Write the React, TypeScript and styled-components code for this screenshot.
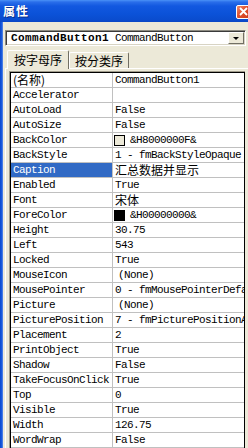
import React from "react";
import styled, { createGlobalStyle } from "styled-components";

const Global = createGlobalStyle`
  html, body { margin: 0; padding: 0; background: #ece9d8; }
  body { width: 248px; height: 448px; overflow: hidden; }
`;

const MONO = `"Liberation Mono", "Noto Sans CJK SC", monospace`;
const CJK = `"Noto Sans CJK SC", "Liberation Sans", sans-serif`;

const Window = styled.div`
  width: 248px;
  height: 448px;
  overflow: hidden;
  display: flex;
  flex-direction: column;
  background: #ece9d8;
`;

const TitleBar = styled.div`
  height: 22px;
  flex: none;
  display: flex;
  align-items: center;
  justify-content: space-between;
  background: linear-gradient(
    to bottom,
    #4a92f7 0px,
    #2a6eea 2px,
    #1258e0 6px,
    #0b52d8 14px,
    #0a4cce 20px,
    #0a47c4 22px
  );
  overflow: hidden;
`;

const Title = styled.span`
  font-family: ${CJK};
  font-weight: 700;
  font-size: 12px;
  letter-spacing: 1px;
  color: #fff;
  padding-left: 3px;
  line-height: 22px;
  text-shadow: 1px 1px 0 #0a2f8a;
`;

const CloseButton = styled.div`
  width: 15px;
  height: 14px;
  margin-right: -3px;
  margin-top: 1px;
  box-sizing: border-box;
  border: 1px solid #fff;
  border-radius: 2px;
  background: linear-gradient(135deg, #f08a6a 0%, #e0502e 45%, #c8381a 100%);
  display: flex;
  align-items: center;
  justify-content: flex-start;
  padding-left: 2px;
`;

const Body = styled.div`
  flex: 1;
  display: flex;
  min-height: 0;
`;

const LeftFrame = styled.div`
  width: 3px;
  flex: none;
  background: linear-gradient(to right, #0a48cc 0px, #1d5fe0 2px, #6f98e8 3px);
`;

const Main = styled.div`
  flex: 1;
  display: flex;
  flex-direction: column;
  padding-left: 2px;
  min-width: 0;
`;

const Combo = styled.div`
  margin-top: 8px;
  width: 241px;
  height: 16px;
  box-sizing: border-box;
  border: 1px solid;
  border-color: #8c8a80 #ffffff #ffffff #8c8a80;
  box-shadow: inset 1px 1px 0 #3a3a3a, inset -1px -1px 0 #d8d4c4;
  background: #fff;
  display: flex;
  align-items: stretch;
  padding: 1px;
  flex: none;
`;

const ComboText = styled.div`
  flex: 1;
  padding-left: 4px;
  font-family: ${MONO};
  font-size: 11px;
  line-height: 12px;
  color: #000;
  white-space: nowrap;
  overflow-x: clip;
`;

const BoldName = styled.span`
  font-weight: 700;
  letter-spacing: 0.4px;
`;

const TypeName = styled.span`
  letter-spacing: -0.6px;
`;

const DropButton = styled.div`
  width: 16px;
  box-sizing: border-box;
  background: #ece9d8;
  border: 1px solid;
  border-color: #ffffff #716f64 #716f64 #ffffff;
  display: flex;
  align-items: center;
  justify-content: center;
`;

const Arrow = styled.div`
  width: 0;
  height: 0;
  border-left: 3px solid transparent;
  border-right: 3px solid transparent;
  border-top: 3px solid #000;
  margin-top: 1px;
`;

const TabRow = styled.div`
  margin-top: 3px;
  margin-left: 2px;
  height: 19px;
  display: flex;
  align-items: flex-end;
  flex: none;
`;

const Tab = styled.div<{ $active?: boolean; $w: number }>`
  width: ${(p) => p.$w}px;
  height: ${(p) => (p.$active ? 19 : 16)}px;
  box-sizing: border-box;
  border-top: 1px solid #fff;
  border-left: 1px solid #fff;
  border-right: 1px solid #716f64;
  border-radius: 2px 2px 0 0;
  background: #ece9d8;
  font-family: ${CJK};
  font-size: 12px;
  line-height: ${(p) => (p.$active ? 17 : 15)}px;
  text-align: center;
  color: #000;
  position: relative;
  z-index: ${(p) => (p.$active ? 1 : 0)};
  margin-bottom: ${(p) => (p.$active ? -1 : 0)}px;
`;

const Panel = styled.div`
  flex: 1;
  min-height: 0;
  border-top: 1px solid #fff;
  border-left: 1px solid #fff;
  padding: 2px 0 0 3px;
`;

const GridOuter = styled.div`
  width: 236px;
  height: 100%;
  box-sizing: border-box;
  border-left: 1px solid #a09c8c;
  border-top: 1px solid #a09c8c;
`;

const Grid = styled.div`
  height: 100%;
  box-sizing: border-box;
  border-left: 1px solid #000;
  border-top: 1px solid #000;
  border-right: 1px solid #000;
  background: #fff;
`;

const Row = styled.div`
  display: flex;
  height: 15px;
  box-sizing: border-box;
  border-bottom: 1px solid #c0c0c0;
`;

const NameCell = styled.div<{ $selected?: boolean }>`
  width: 102px;
  flex: none;
  box-sizing: border-box;
  border-right: 1px solid #c0c0c0;
  padding-left: 2px;
  background: ${(p) => (p.$selected ? "#316ac5" : "#fff")};
  color: ${(p) => (p.$selected ? "#fff" : "#000")};
  font-family: ${MONO};
  font-size: 11px;
  letter-spacing: -0.6px;
  line-height: 14px;
  white-space: nowrap;
  overflow-x: clip;
`;

const ValueCell = styled.div<{ $indent?: number }>`
  flex: 1;
  min-width: 0;
  padding-left: ${(p) => 2 + (p.$indent ?? 0)}px;
  display: flex;
  align-items: center;
  font-family: ${MONO};
  font-size: 11px;
  letter-spacing: -0.6px;
  line-height: 14px;
  white-space: nowrap;
  overflow-x: clip;
  color: #000;
`;

const Cjk = styled.span`
  font-family: ${CJK};
  font-size: 12px;
  letter-spacing: 0;
  line-height: 14px;
`;

const Swatch = styled.span<{ $color: string }>`
  display: inline-block;
  width: 11px;
  height: 11px;
  box-sizing: border-box;
  border: 1px solid #000;
  background: ${(p) => p.$color};
  margin-left: -1px;
  margin-right: 5px;
  flex: none;
`;

type Prop = {
  name: React.ReactNode;
  value?: React.ReactNode;
  swatch?: string;
  indent?: number;
  selected?: boolean;
};

const props: Prop[] = [
  { name: <Cjk>(名称)</Cjk>, value: "CommandButton1" },
  { name: "Accelerator", value: "" },
  { name: "AutoLoad", value: "False" },
  { name: "AutoSize", value: "False" },
  { name: "BackColor", value: "&H8000000F&", swatch: "#ece9d8" },
  { name: "BackStyle", value: "1 - fmBackStyleOpaque" },
  { name: "Caption", value: <Cjk>汇总数据并显示</Cjk>, selected: true },
  { name: "Enabled", value: "True" },
  { name: "Font", value: <Cjk>宋体</Cjk> },
  { name: "ForeColor", value: "&H00000000&", swatch: "#000000" },
  { name: "Height", value: "30.75" },
  { name: "Left", value: "543" },
  { name: "Locked", value: "True" },
  { name: "MouseIcon", value: "(None)", indent: 3 },
  { name: "MousePointer", value: "0 - fmMousePointerDefault" },
  { name: "Picture", value: "(None)", indent: 3 },
  { name: "PicturePosition", value: "7 - fmPicturePositionAboveCenter" },
  { name: "Placement", value: "2" },
  { name: "PrintObject", value: "True" },
  { name: "Shadow", value: "False" },
  { name: "TakeFocusOnClick", value: "True" },
  { name: "Top", value: "0" },
  { name: "Visible", value: "True" },
  { name: "Width", value: "126.75" },
  { name: "WordWrap", value: "False" },
];

export default function App() {
  return (
    <>
      <Global />
      <Window>
        <TitleBar>
          <Title>属性</Title>
          <CloseButton>
            <svg width="9" height="9" viewBox="0 0 9 9">
              <path d="M1 1 L8 8 M8 1 L1 8" stroke="#fff" strokeWidth="1.8" />
            </svg>
          </CloseButton>
        </TitleBar>
        <Body>
          <LeftFrame />
          <Main>
            <Combo>
              <ComboText>
                <BoldName>CommandButton1</BoldName>
                <TypeName> CommandButton</TypeName>
              </ComboText>
              <DropButton>
                <Arrow />
              </DropButton>
            </Combo>
            <TabRow>
              <Tab $active $w={62}>按字母序</Tab>
              <Tab $w={60}>按分类序</Tab>
            </TabRow>
            <Panel>
              <GridOuter>
                <Grid>
                  {props.map((p, i) => (
                    <Row key={i}>
                      <NameCell $selected={p.selected}>{p.name}</NameCell>
                      <ValueCell $indent={p.indent}>
                        {p.swatch && <Swatch $color={p.swatch} />}
                        {p.value}
                      </ValueCell>
                    </Row>
                  ))}
                </Grid>
              </GridOuter>
            </Panel>
          </Main>
        </Body>
      </Window>
    </>
  );
}
